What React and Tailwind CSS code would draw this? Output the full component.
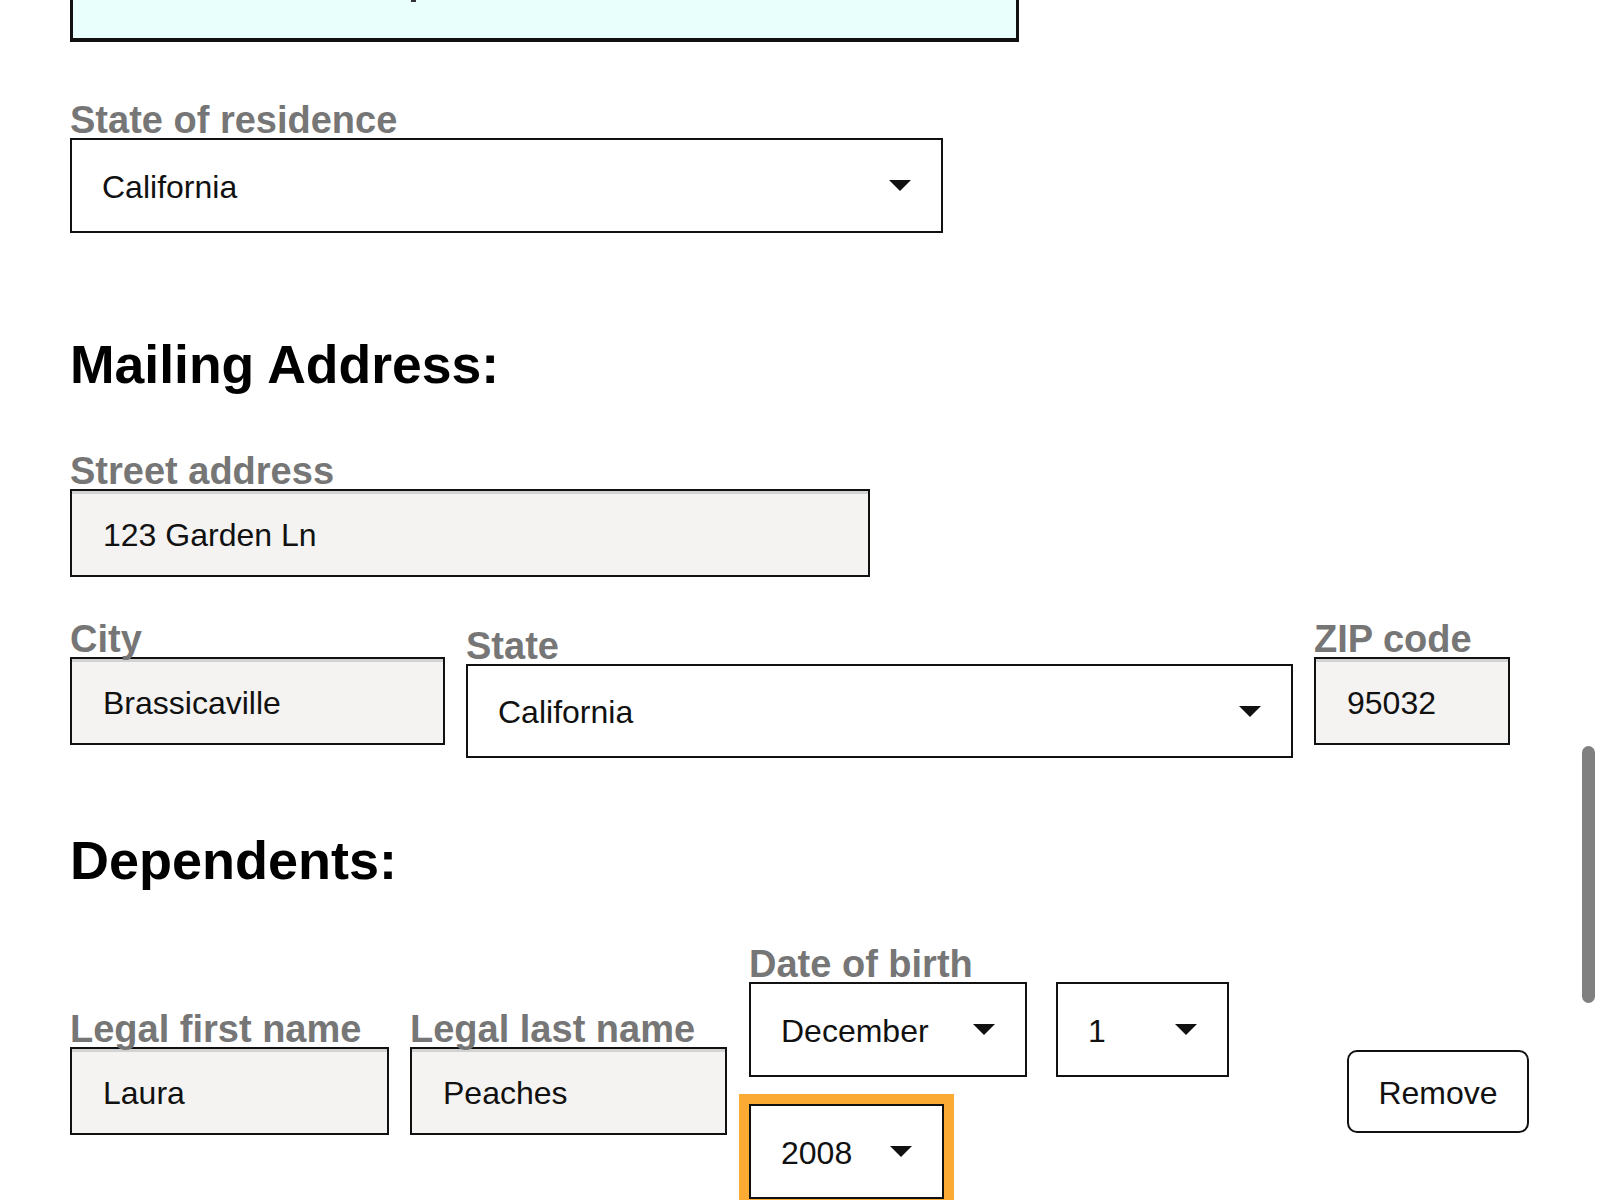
import React from "react";

function Caret() {
  return (
    <svg width="22" height="11" viewBox="0 0 22 11" className="shrink-0">
      <polygon points="0,0 22,0 11,11" fill="#111" />
    </svg>
  );
}

function Label({ children }) {
  return (
    <div className="h-[36px] whitespace-nowrap text-[38px] font-bold leading-[36px] text-[#767676]">
      {children}
    </div>
  );
}

function Select({ value, className }) {
  return (
    <div
      className={
        "flex items-center justify-between border-2 border-[#111] bg-white pl-[30px] pr-[30px] text-[32px] leading-none text-[#111] " +
        className
      }
    >
      <span className="pt-[2px]">{value}</span>
      <Caret />
    </div>
  );
}

function TextBox({ value, className }) {
  return (
    <div
      className={
        "flex h-[88px] items-center border-2 border-[#111] bg-[#f4f3f1] pl-[31px] pt-[4px] text-[32px] leading-none text-[#111] shadow-[inset_0_3px_0_#d3d3d3] " +
        className
      }
    >
      {value}
    </div>
  );
}

export default function App() {
  return (
    <div className="relative h-[1200px] w-[1600px] overflow-hidden bg-white font-['Liberation_Sans',Arial,sans-serif] text-black">
      <div className="flex flex-col items-start pl-[70px]">
        {/* Top info box (scrolled out of view) */}
        <div className="relative h-[42px] w-[949px] border-x-[3px] border-b-4 border-[#111] bg-[#e9fffb]">
          <div className="absolute left-[338px] top-0 h-[2px] w-[5px] bg-[#333]" />
        </div>

        {/* State of residence */}
        <div className="mt-[60px]">
          <Label>State of residence</Label>
          <Select value="California" className="h-[95px] w-[873px]" />
        </div>

        <h2 className="mt-[106px] h-[52px] whitespace-nowrap text-[53.5px] font-bold leading-[52px]">Mailing Address:</h2>

        <div className="mt-[62px]">
          <Label>Street address</Label>
          <TextBox value="123 Garden Ln" className="w-[800px]" />
        </div>

        <div className="mt-[44px] flex items-start gap-[21px]">
          <div className="w-[375px]">
            <Label>City</Label>
            <TextBox value="Brassicaville" className="w-[375px]" />
          </div>
          <div className="mt-[7px] w-[827px]">
            <Label>State</Label>
            <Select value="California" className="h-[94px] w-[827px]" />
          </div>
          <div className="w-[196px]">
            <Label>ZIP code</Label>
            <TextBox value="95032" className="w-[196px]" />
          </div>
        </div>

        <h2 className="mt-[76px] h-[52px] whitespace-nowrap text-[54px] font-bold leading-[52px]">Dependents:</h2>

        <div className="mt-[60px] flex items-start">
          <div className="mt-[65px] w-[319px]">
            <Label>Legal first name</Label>
            <TextBox value="Laura" className="w-[319px]" />
          </div>
          <div className="ml-[21px] mt-[65px] w-[317px]">
            <Label>Legal last name</Label>
            <TextBox value="Peaches" className="w-[317px]" />
          </div>
          <div className="ml-[22px] w-[480px]">
            <Label>Date of birth</Label>
            <div className="flex flex-wrap gap-x-[29px] gap-y-[27px]">
              <Select value="December" className="h-[95px] w-[278px]" />
              <Select value="1" className="h-[95px] w-[173px]" />
              <Select
                value="2008"
                className="h-[95px] w-[195px] shadow-[0_0_0_10px_#fbab33]"
              />
            </div>
          </div>
          <button className="ml-[118px] mt-[104px] flex h-[83px] w-[182px] items-center justify-center rounded-[10px] border-2 border-[#111] bg-white pt-[2px] text-[32px] leading-none text-[#111]">
            Remove
          </button>
        </div>
      </div>

      {/* overlay scrollbar */}
      <div className="absolute left-[1582px] top-[746px] h-[257px] w-[13px] rounded-full bg-[#808080]" />
    </div>
  );
}
